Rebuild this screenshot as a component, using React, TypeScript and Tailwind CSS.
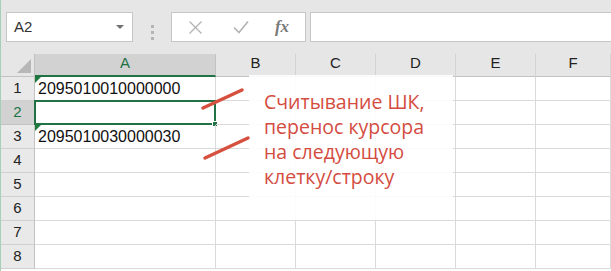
import React from "react";

const columns = ["A", "B", "C", "D", "E", "F"];
const colWidths = ["w-[181px]", "w-[80px]", "w-[80px]", "w-[80px]", "w-[80px]", "flex-1"];
const rows = [1, 2, 3, 4, 5, 6, 7, 8];
const values: Record<number, string> = {
  1: "2095010010000000",
  3: "2095010030000030",
};

const ErrorMark = () => (
  <svg className="absolute left-0 top-0" width="6" height="6" viewBox="0 0 6 6">
    <polygon points="0,0 6,0 0,6" fill="#1f7a3c" />
  </svg>
);

const App = () => {
  return (
    <div className="relative w-[611px] h-[271px] overflow-hidden bg-white border-l border-[#a7cfb3] font-['Liberation_Sans',sans-serif]">
      {/* formula bar */}
      <div className="flex h-[54px] bg-[#e6e6e6] pt-[12px]">
        <div className="ml-[5px] flex h-[30px] w-[127px] items-center justify-between border border-[#c6c6c6] bg-white pl-[7px] pr-[8px]">
          <span className="text-[15px] text-[#333]">A2</span>
          <svg width="8" height="5" viewBox="0 0 8 5">
            <polygon points="0,0 8,0 4,4" fill="#707070" />
          </svg>
        </div>
        <div className="flex w-[38px] flex-col items-center justify-center gap-[3px] pb-[2px]">
          <span className="block h-[3px] w-[3px] bg-[#b4b4b4]" />
          <span className="block h-[3px] w-[3px] bg-[#b4b4b4]" />
          <span className="block h-[3px] w-[3px] bg-[#b4b4b4]" />
        </div>
        <div className="flex h-[30px] w-[135px] items-center border border-[#c6c6c6] bg-white">
          <div className="flex w-[45px] justify-center pl-[2px]">
            <svg width="15" height="15" viewBox="0 0 15 15">
              <path d="M1.5 1.5 L13.5 13.5 M13.5 1.5 L1.5 13.5" stroke="#b3b3b3" strokeWidth="1.3" fill="none" />
            </svg>
          </div>
          <div className="flex w-[46px] justify-center pl-[2px]">
            <svg width="16" height="14" viewBox="0 0 16 14">
              <path d="M1 7.5 L6 12.5 L15 1.5" stroke="#b3b3b3" strokeWidth="1.6" fill="none" />
            </svg>
          </div>
          <div className="flex flex-1 justify-center pr-[4px]">
            <span className="font-['Liberation_Serif',serif] text-[17px] font-bold italic text-[#7a7a7a]">fx</span>
          </div>
        </div>
        <div className="ml-[4px] -mr-[4px] h-[30px] flex-1 border border-[#c6c6c6] bg-white" />
      </div>

      {/* column headers */}
      <div className="flex h-[23px] bg-[#e6e6e6]">
        <div className="relative w-[34px] border-r border-b border-[#c2c2c2]">
          <svg className="absolute right-[3px] bottom-[3px]" width="14" height="14" viewBox="0 0 14 14">
            <polygon points="14,0 14,14 0,14" fill="#b7b7b7" />
          </svg>
        </div>
        {columns.map((col, i) =>
          col === "A" ? (
            <div
              key={col}
              className={`${colWidths[i]} flex items-end justify-center border-r border-[#c2c2c2] border-b-2 border-b-[#217346] bg-[#d2d2d2] pb-[1px] text-[15px] text-[#217346]`}
            >
              {col}
            </div>
          ) : (
            <div
              key={col}
              className={`${colWidths[i]} flex items-end justify-center border-r border-b border-r-[#d4d4d4] border-b-[#c2c2c2] pb-[2px] text-[15px] text-[#222]`}
            >
              {col}
            </div>
          )
        )}
      </div>

      {/* rows */}
      {rows.map((r) => (
        <div key={r} className="flex h-[24px]">
          <div
            className={`flex w-[34px] items-center justify-center border-r border-b text-[15px] ${
              r === 2
                ? "border-r-[#217346] border-b-[#c2c2c2] bg-[#d2d2d2] text-[#217346]"
                : "border-r-[#c2c2c2] border-b-[#d0d0d0] bg-[#e9e9e9] text-[#222]"
            }`}
          >
            {r}
          </div>
          {columns.map((col, i) => (
            <div
              key={col}
              className={`${colWidths[i]} relative flex items-center border-r border-b border-[#dadada] pl-[3px] text-[16px] text-[#111]`}
            >
              {col === "A" && values[r] && (
                <>
                  <ErrorMark />
                  <span>{values[r]}</span>
                </>
              )}
              {col === "A" && r === 2 && (
                <div className="absolute -left-[1px] -top-[1px] -right-[1px] -bottom-[1px] border-2 border-[#217346]">
                  <span className="absolute -right-[4px] -bottom-[4px] block h-[6px] w-[6px] border border-white bg-[#217346]" />
                </div>
              )}
            </div>
          ))}
        </div>
      ))}

      {/* annotation */}
      <div className="absolute left-[248px] top-[75px] h-[145px] w-[204px] bg-white/90 pl-[15px] pt-[14px]">
        <p className="font-['Open_Sans',sans-serif] text-[19.5px] leading-[25px] text-[#d44c3f]">
          Считывание ШК,
          <br />
          перенос курсора
          <br />
          на следующую
          <br />
          клетку/строку
        </p>
      </div>
      <svg className="absolute left-0 top-0" width="611" height="271" viewBox="0 0 611 271">
        <path d="M202 108 L241 90" stroke="#d6503f" strokeWidth="3.5" strokeLinecap="round" />
        <path d="M204 158 L247 138" stroke="#d6503f" strokeWidth="3.5" strokeLinecap="round" />
      </svg>
    </div>
  );
};

export default App;
